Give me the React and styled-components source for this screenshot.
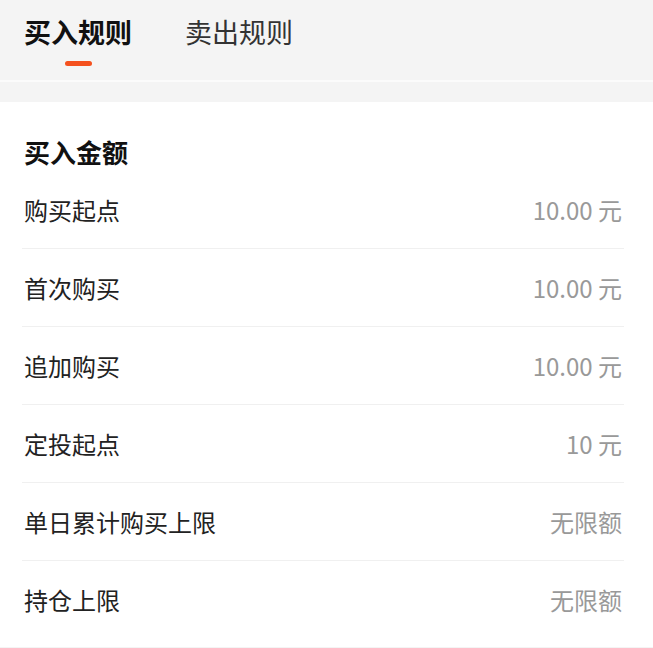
import React from 'react';
import styled, { createGlobalStyle } from 'styled-components';

const GlobalStyle = createGlobalStyle`
  body {
    margin: 0;
    background: #f4f4f4;
    font-family: "Noto Sans CJK SC", "Noto Sans", sans-serif;
  }
`;

const Page = styled.div`
  width: 653px;
  min-height: 648px;
  background: #f4f4f4;
`;

const TabBar = styled.div`
  display: flex;
  gap: 53px;
  height: 82px;
  padding: 0 24px;
  box-sizing: border-box;
  border-bottom: 2px solid #fbfbfb;
`;

const Tab = styled.div`
  display: flex;
  flex-direction: column;
  align-items: center;
  padding-top: 17px;
`;

const TabLabel = styled.div`
  font-size: 27px;
  line-height: 30px;
  font-weight: ${(p) => (p.active ? 700 : 400)};
  color: ${(p) => (p.active ? '#111' : '#333')};
`;

const Indicator = styled.div`
  width: 27px;
  height: 5px;
  margin-top: 14px;
  border-radius: 3px;
  background: ${(p) => (p.active ? '#f4511e' : 'transparent')};
`;

const Card = styled.div`
  margin-top: 20px;
  background: #fff;
  padding: 30px 29px 8px 22px;
`;

const Title = styled.div`
  font-size: 26px;
  line-height: 39px;
  font-weight: 700;
  color: #111;
  padding: 0 2px;
`;

const Row = styled.div`
  display: flex;
  align-items: center;
  justify-content: space-between;
  height: 77px;
  padding: 0 2px;
  border-bottom: 1px solid ${(p) => (p.last ? 'transparent' : '#f0f0f0')};
`;

const Label = styled.span`
  font-size: 24px;
  color: #222;
`;

const Value = styled.span`
  font-size: 24px;
  color: #999;
`;

const rows = [
  ['购买起点', '10.00 元'],
  ['首次购买', '10.00 元'],
  ['追加购买', '10.00 元'],
  ['定投起点', '10 元'],
  ['单日累计购买上限', '无限额'],
  ['持仓上限', '无限额'],
];

const App = () => {
  return (
    <Page>
      <GlobalStyle />
      <TabBar>
        <Tab>
          <TabLabel active>买入规则</TabLabel>
          <Indicator active />
        </Tab>
        <Tab>
          <TabLabel>卖出规则</TabLabel>
          <Indicator />
        </Tab>
      </TabBar>
      <Card>
        <Title>买入金额</Title>
        {rows.map(([label, value], i) => (
          <Row key={label} last={i === rows.length - 1}>
            <Label>{label}</Label>
            <Value>{value}</Value>
          </Row>
        ))}
      </Card>
    </Page>
  );
};

export default App;
